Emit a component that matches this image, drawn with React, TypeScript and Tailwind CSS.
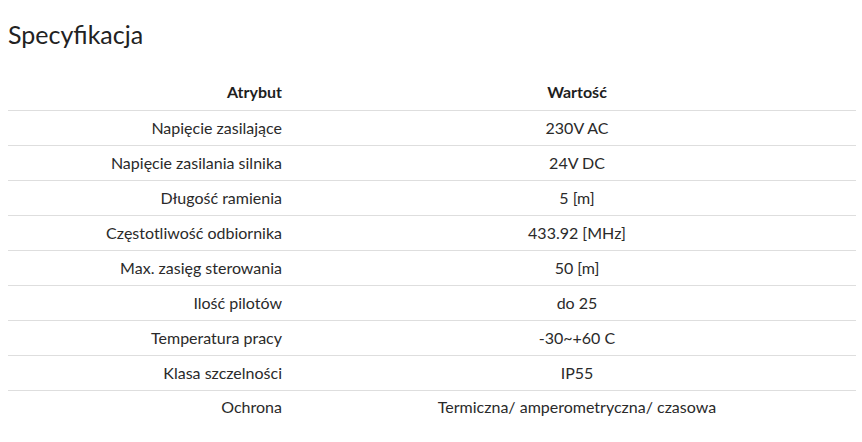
const rows: [string, string][] = [
  ["Napięcie zasilające", "230V AC"],
  ["Napięcie zasilania silnika", "24V DC"],
  ["Długość ramienia", "5 [m]"],
  ["Częstotliwość odbiornika", "433.92 [MHz]"],
  ["Max. zasięg sterowania", "50 [m]"],
  ["Ilość pilotów", "do 25"],
  ["Temperatura pracy", "-30~+60 C"],
  ["Klasa szczelności", "IP55"],
  ["Ochrona", "Termiczna/ amperometryczna/ czasowa"],
];

export default function App() {
  return (
    <div className="w-[862px] h-[442px] bg-white overflow-hidden px-2 pt-[18px] font-['Lato','Liberation_Sans',sans-serif] text-[#2a2a2a]">
      <h2 className="text-[25px] leading-[32px] text-[#222]">Specyfikacja</h2>
      <table className="w-[848px] mt-[25px] border-collapse text-[16px]">
        <thead>
          <tr className="h-[35px] border-b border-[#dedede]">
            <th className="w-[290px] text-right pr-4 font-bold text-[#1e1e1e]">Atrybut</th>
            <th className="text-center font-bold text-[#1e1e1e]">Wartość</th>
          </tr>
        </thead>
        <tbody>
          {rows.map(([k, v], i) => (
            <tr
              key={k}
              className={i < rows.length - 1 ? "h-[35px] border-b border-[#dedede]" : "h-[34px]"}
            >
              <td className="text-right pr-4">{k}</td>
              <td className="text-center">{v}</td>
            </tr>
          ))}
        </tbody>
      </table>
    </div>
  );
}
